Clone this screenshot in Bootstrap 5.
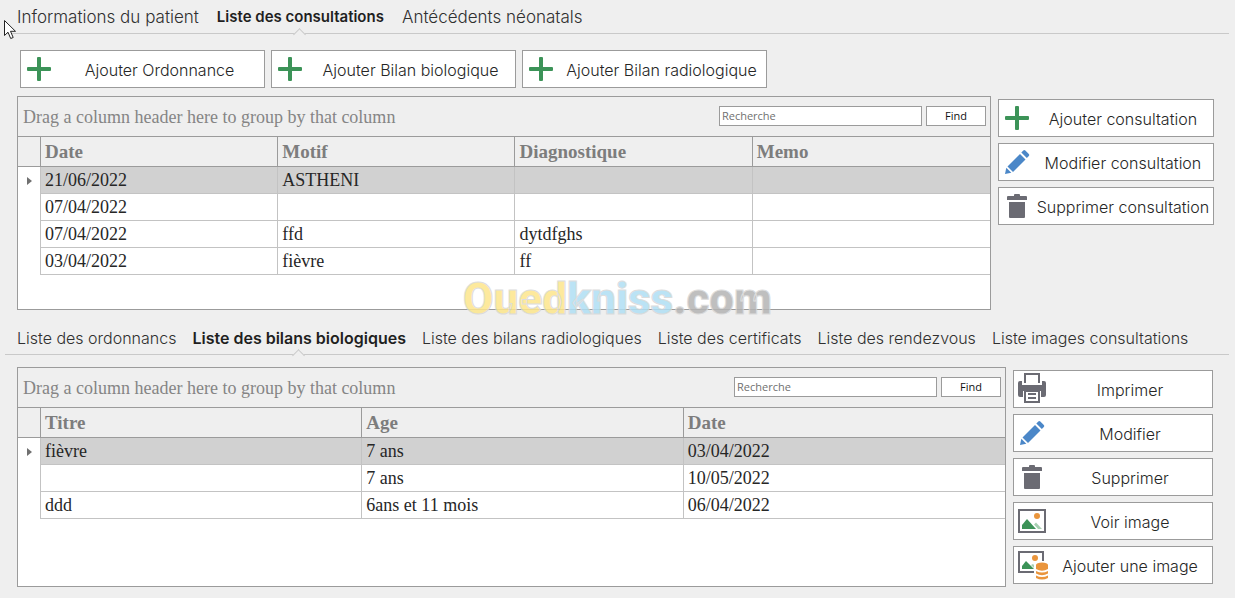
<!DOCTYPE html>
<html lang="fr">
<head>
<meta charset="utf-8">
<meta name="viewport" content="width=device-width, initial-scale=1">
<title>Dossier patient - Consultations</title>
<link href="https://cdn.jsdelivr.net/npm/bootstrap@5.3.0/dist/css/bootstrap.min.css" rel="stylesheet">
<style>
  :root { --line: #9b9b9b; --cell: #c3c3c3; --surface: #efefef; }
  body { background: var(--surface); color: #262626; font-family: Inter, "Liberation Sans", sans-serif; font-size: 16px; line-height: 20px; }
  .page-shell { padding: 0 6px 11px 5px; }
  /* tab strips */
  .tab-strip { border-bottom: 1px solid #c9c9c9; padding: 0 12px; gap: 16px; }
  .tab-strip .nav-link { padding: 7px 0 6px; color: #303030; line-height: 20px; position: relative; white-space: nowrap; font-weight: 300; font-size: 16px; }
  .tab-strip .nav-link.active { font-weight: 600; color: #1f1f1f; }
  .tab-strip .nav-link.active::after { content: ""; position: absolute; left: 50%; bottom: -6px; width: 9px; height: 9px; margin-left: -5px; background: var(--surface); border: solid #c9c9c9; border-width: 1px 0 0 1px; transform: rotate(45deg); }
  .tab-upper { gap: 18px; }
  .tab-upper .nav-link { font-size: 17px; }
  .tab-upper .nav-link.active { font-size: 15px; }
  /* command buttons */
  .cmd { display: flex; align-items: center; height: 38px; padding: 0 0 0 2px; background: #fff; border: 1px solid var(--line); border-radius: 0; font-size: 16px; line-height: 20px; font-weight: 300; color: #262626; white-space: nowrap; }
  .cmd svg { width: 32px; height: 32px; flex: none; overflow: visible; }
  .cmd span { padding-top: 2px; }
  .cmd:hover { background: #f5f5f5; border-color: var(--line); }
  .cmd-top { flex: 0 1 245px; }
  .cmd-gap { gap: 6px; }
  .top-cmds { padding: 16px 15px 8px; }
  .panel-row { padding: 0 15px 0 12px; gap: 7px; }
  .side-wide { flex: 0 0 216px; padding-top: 3px; }
  .side-narrow { flex: 0 0 200px; padding-top: 3px; }
  /* data grids */
  .data-box { border: 1px solid var(--line); background: #fff; min-width: 0; font-family: "Liberation Serif", serif; font-size: 18px; }
  .box-a { min-height: 214px; }
  .box-b { min-height: 220px; }
  .group-bar { background: var(--surface); border-bottom: 1px solid var(--line); height: 40px; padding: 0 4px 0 5px; color: #858585; }
  .find-form { font-family: "Open Sans", sans-serif; gap: 4px; padding-bottom: 2px; }
  .find-form .form-control { width: 203px; height: 20px; min-height: 0; padding: 0 2px; border: 1px solid var(--line); border-radius: 0; font-size: 11px; line-height: 18px; }
  .find-form .form-control::placeholder { color: #707070; }
  .find-form .btn { width: 60px; height: 20px; padding: 0; border: 1px solid var(--line); border-radius: 0; background: #fff; font-size: 11px; line-height: 18px; color: #111; }
  .data-table { width: 100%; table-layout: fixed; border-collapse: separate; border-spacing: 0; }
  .data-table th, .data-table td { padding: 0 4px; border-right: 1px solid var(--cell); border-bottom: 1px solid var(--cell); line-height: 20px; }
  .data-table th { height: 30px; background: var(--surface); color: #7d7d7d; border-color: var(--line); font-weight: 700; font-size: 19px; }
  .data-table td { height: 27px; }
  .data-table th:last-child, .data-table td:last-child { border-right: 0; }
  .data-table .mark-col { width: 23px; padding: 0 0 0 9px; }
  .data-table td.mark-col { border-bottom: 0; }
  .data-table .picked td:not(.mark-col) { background: #d1d1d1; }
  .data-table .mark-col svg { display: block; }
  .lower-tabs { margin-top: 11px; }
  .lower-panel { padding-top: 12px; padding-right: 16px; }
  /* overlays */
  .pointer { position: absolute; left: 4px; top: 20px; }
  .watermark { font: 900 44px/48px Roboto, sans-serif; -webkit-text-stroke: 1px #d8d8d8; opacity: .85; pointer-events: none; }
  .wm-a { color: #fde68c; } .wm-b { color: #b0dff4; } .wm-c { color: #b4b4b4; }
</style>
</head>
<body>
<svg class="d-none" aria-hidden="true">
  <symbol id="i-plus" viewBox="0 0 32 32"><path fill="#3c9358" d="M14 5a1 1 0 0 1 1-1h2a1 1 0 0 1 1 1v9h9a1 1 0 0 1 1 1v2a1 1 0 0 1-1 1h-9v9a1 1 0 0 1-1 1h-2a1 1 0 0 1-1-1v-9H5a1 1 0 0 1-1-1v-2a1 1 0 0 1 1-1h9z"/></symbol>
  <symbol id="i-pencil" viewBox="0 0 32 32"><g fill="#4b87c8"><path d="M19 8l5.500 5.500L12 26l-5.500-5.500z"/><path d="M20.300 6.500l2-2q1-1 2 0l3.500 3.500q1 1 0 2l-2 2z"/><path d="M5.300 21.800l5 5L4 28z"/></g></symbol>
  <symbol id="i-trash" viewBox="0 0 32 32"><path fill="#6b6b73" d="M6 7a1 1 0 0 1 1-1h6V5a1 1 0 0 1 1-1h4a1 1 0 0 1 1 1v1h6a1 1 0 0 1 1 1v3H6zM8 12h16v15a1 1 0 0 1-1 1H9a1 1 0 0 1-1-1z"/></symbol>
  <symbol id="i-print" viewBox="0 0 32 32"><path fill="none" stroke="#6b6b73" stroke-width="2" d="M9 10V1h14v9"/><path fill="#6b6b73" d="M2 10a2 2 0 0 1 2-2h2v4h20V8h2a2 2 0 0 1 2 2v12a2 2 0 0 1-2 2H4a2 2 0 0 1-2-2z"/><path fill="#fff" d="M7 18h18v12H7z"/><path fill="#fff" stroke="#6b6b73" stroke-width="2" d="M9 18h14v11H9z"/><path fill="#6b6b73" d="M12 20h8v2h-8zM12 24h8v2h-8z"/></symbol>
  <symbol id="i-image" viewBox="0 0 32 32"><path fill="#fff" stroke="#6b6b73" stroke-width="2" d="M3 5h26v22H3z"/><circle cx="21" cy="11" r="3" fill="#ea953c"/><path fill="#3c9358" d="M6 24v-4l5-6 9 10z"/><path fill="#a6cfb1" d="M18 19.500l2-2 6 6.500h-4z"/></symbol>
  <symbol id="i-image-db" viewBox="0 0 32 32"><path fill="#fff" stroke="#6b6b73" stroke-width="2" d="M3 3h24v20H3z"/><circle cx="19" cy="9" r="3" fill="#ea953c"/><path fill="#3c9358" d="M6 20v-3l4-5 8 8z"/><path fill="#a6cfb1" d="M15 16l2-1 3 3v2h-1z"/><path fill="#fff" d="M18 12h15v19H18z"/><g fill="#ea953c"><ellipse cx="26" cy="16" rx="6" ry="2.500"/><path d="M20 16v4q6 3.500 12 0v-4zM20 22v2.500q6 3.500 12 0V22q-6 3-12 0zM20 26.500V29q6 3 12 0v-2.500q-6 3-12 0z"/></g></symbol>
  <symbol id="i-row" viewBox="0 0 5 8"><path fill="#707070" d="M0 0l5 4-5 4z"/></symbol>
</svg>

<main class="page-shell position-relative min-vh-100">
  <ul class="nav tab-strip tab-upper">
    <li class="nav-item"><a class="nav-link" href="#patient">Informations du patient</a></li>
    <li class="nav-item"><a class="nav-link active" href="#consultations" aria-current="page">Liste des consultations</a></li>
    <li class="nav-item"><a class="nav-link" href="#antecedents">Antécédents néonatals</a></li>
  </ul>

  <div class="top-cmds cmd-gap d-flex">
    <button type="button" class="btn cmd cmd-top"><svg aria-hidden="true"><use href="#i-plus"/></svg><span class="flex-fill text-center">Ajouter Ordonnance</span></button>
    <button type="button" class="btn cmd cmd-top"><svg aria-hidden="true"><use href="#i-plus"/></svg><span class="flex-fill text-center">Ajouter Bilan biologique</span></button>
    <button type="button" class="btn cmd cmd-top"><svg aria-hidden="true"><use href="#i-plus"/></svg><span class="flex-fill text-center">Ajouter Bilan radiologique</span></button>
  </div>

  <section class="panel-row d-flex align-items-start">
    <div class="data-box box-a flex-fill">
      <div class="group-bar d-flex align-items-center justify-content-between">
        <span>Drag a column header here to group by that column</span>
        <form class="find-form d-flex">
          <input class="form-control" type="text" placeholder="Recherche" aria-label="Recherche">
          <button type="button" class="btn">Find</button>
        </form>
      </div>
      <table class="data-table">
        <thead><tr><th class="mark-col"></th><th>Date</th><th>Motif</th><th>Diagnostique</th><th>Memo</th></tr></thead>
        <tbody>
          <tr class="picked"><td class="mark-col"><svg width="5" height="8" aria-hidden="true"><use href="#i-row"/></svg></td><td>21/06/2022</td><td>ASTHENI</td><td></td><td></td></tr>
          <tr><td class="mark-col"></td><td>07/04/2022</td><td></td><td></td><td></td></tr>
          <tr><td class="mark-col"></td><td>07/04/2022</td><td>ffd</td><td>dytdfghs</td><td></td></tr>
          <tr><td class="mark-col"></td><td>03/04/2022</td><td>fièvre</td><td>ff</td><td></td></tr>
        </tbody>
      </table>
    </div>
    <div class="side-wide cmd-gap d-flex flex-column">
      <button type="button" class="btn cmd"><svg aria-hidden="true"><use href="#i-plus"/></svg><span class="flex-fill text-center">Ajouter consultation</span></button>
      <button type="button" class="btn cmd"><svg aria-hidden="true"><use href="#i-pencil"/></svg><span class="flex-fill text-center">Modifier consultation</span></button>
      <button type="button" class="btn cmd"><svg aria-hidden="true"><use href="#i-trash"/></svg><span class="flex-fill text-center">Supprimer consultation</span></button>
    </div>
  </section>

  <ul class="nav tab-strip lower-tabs">
    <li class="nav-item"><a class="nav-link" href="#ordonnances">Liste des ordonnancs</a></li>
    <li class="nav-item"><a class="nav-link active" href="#biologiques" aria-current="page">Liste des bilans biologiques</a></li>
    <li class="nav-item"><a class="nav-link" href="#radiologiques">Liste des bilans radiologiques</a></li>
    <li class="nav-item"><a class="nav-link" href="#certificats">Liste des certificats</a></li>
    <li class="nav-item"><a class="nav-link" href="#rendezvous">Liste des rendezvous</a></li>
    <li class="nav-item"><a class="nav-link" href="#images">Liste images consultations</a></li>
  </ul>

  <section class="panel-row lower-panel d-flex align-items-start">
    <div class="data-box box-b flex-fill">
      <div class="group-bar d-flex align-items-center justify-content-between">
        <span>Drag a column header here to group by that column</span>
        <form class="find-form d-flex">
          <input class="form-control" type="text" placeholder="Recherche" aria-label="Recherche">
          <button type="button" class="btn">Find</button>
        </form>
      </div>
      <table class="data-table">
        <thead><tr><th class="mark-col"></th><th>Titre</th><th>Age</th><th>Date</th></tr></thead>
        <tbody>
          <tr class="picked"><td class="mark-col"><svg width="5" height="8" aria-hidden="true"><use href="#i-row"/></svg></td><td>fièvre</td><td>7 ans</td><td>03/04/2022</td></tr>
          <tr><td class="mark-col"></td><td></td><td>7 ans</td><td>10/05/2022</td></tr>
          <tr><td class="mark-col"></td><td>ddd</td><td>6ans et 11 mois</td><td>06/04/2022</td></tr>
        </tbody>
      </table>
    </div>
    <div class="side-narrow cmd-gap d-flex flex-column">
      <button type="button" class="btn cmd"><svg aria-hidden="true"><use href="#i-print"/></svg><span class="flex-fill text-center">Imprimer</span></button>
      <button type="button" class="btn cmd"><svg aria-hidden="true"><use href="#i-pencil"/></svg><span class="flex-fill text-center">Modifier</span></button>
      <button type="button" class="btn cmd"><svg aria-hidden="true"><use href="#i-trash"/></svg><span class="flex-fill text-center">Supprimer</span></button>
      <button type="button" class="btn cmd"><svg aria-hidden="true"><use href="#i-image"/></svg><span class="flex-fill text-center">Voir image</span></button>
      <button type="button" class="btn cmd"><svg aria-hidden="true"><use href="#i-image-db"/></svg><span class="flex-fill text-center">Ajouter une image</span></button>
    </div>
  </section>

  <div class="watermark position-absolute top-50 start-50 translate-middle text-nowrap"><span class="wm-a">Oued</span><span class="wm-b">kniss</span><span class="wm-c">.com</span></div>
  <svg class="pointer" width="13" height="21" viewBox="0 0 13 21" aria-hidden="true"><path fill="#fff" stroke="#222" d="M.5.500v15l3.500-3.300 2.700 6.300 2.500-1-2.700-6.200h5z"/></svg>
</main>
<script src="https://cdn.jsdelivr.net/npm/bootstrap@5.3.0/dist/js/bootstrap.bundle.min.js"></script>
</body>
</html>
